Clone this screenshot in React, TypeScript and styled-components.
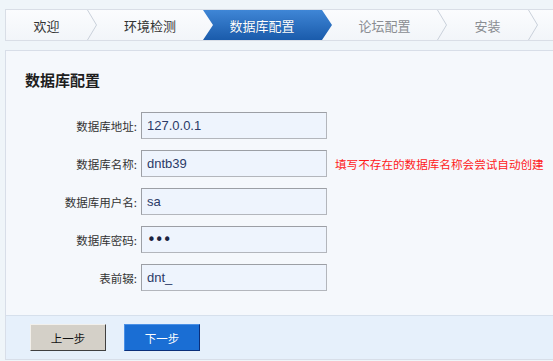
import React from "react";
import styled, { createGlobalStyle, css } from "styled-components";

const GlobalStyle = createGlobalStyle`
  html, body {
    margin: 0;
    padding: 0;
    background: #eff5f9;
    overflow: hidden;
  }
  body {
    font-family: "Noto Sans CJK SC", "Noto Sans", sans-serif;
  }
`;

const Page = styled.div`
  padding: 9px 0 0 5px;
`;

const StepBar = styled.div`
  display: flex;
  height: 30px;
  border: 1px solid #d9dee6;
  border-right: none;
  background: linear-gradient(#fbfcfe, #f2f5f9);
`;

const Step = styled.div<{ $width: number; $muted?: boolean }>`
  width: ${(p) => p.$width}px;
  flex-shrink: 0;
  display: flex;
  align-items: center;
  justify-content: center;
  font-size: 13px;
  color: ${(p) => (p.$muted ? "#8a8d92" : "#333")};
`;

const ActiveStep = styled.div`
  width: 129px;
  flex-shrink: 0;
  box-sizing: border-box;
  padding-right: 11px;
  display: flex;
  align-items: center;
  justify-content: center;
  font-size: 13px;
  color: #fff;
  background: linear-gradient(#3f86d6, #1a5bab);
  clip-path: polygon(0 0, 119px 0, 129px 50%, 119px 100%, 0 100%, 10px 50%);
  text-shadow: 0 0 1px rgba(0, 30, 80, 0.4);
`;

const SepSvg = styled.svg`
  flex-shrink: 0;
  display: block;
`;

const Sep = () => (
  <SepSvg width="10" height="30" viewBox="0 0 10 30">
    <polyline points="0.5,0 9.5,15 0.5,30" fill="none" stroke="#c9d0da" strokeWidth="1" />
  </SepSvg>
);

const Panel = styled.div`
  margin-top: 9px;
  border: 1px solid #d8dee8;
  border-right: none;
  background: #f5f8fc;
`;

const Body = styled.div`
  padding: 17px 0 24px 19px;
`;

const Title = styled.h2`
  margin: 0 0 20px;
  font-size: 15px;
  line-height: 24px;
  font-weight: bold;
  color: #1e1e1e;
`;

const Form = styled.div`
  display: grid;
  grid-template-columns: 112px 186px auto;
  column-gap: 4px;
  row-gap: 11px;
  align-items: center;
`;

const Label = styled.label`
  text-align: right;
  font-size: 11.5px;
  color: #333;
  white-space: nowrap;
`;

const Field = styled.input`
  box-sizing: border-box;
  width: 186px;
  height: 27px;
  margin: 0;
  padding: 0 5px;
  border: 1px solid #b3b6bc;
  border-top-color: #9c9fa5;
  border-left-color: #9c9fa5;
  background: #eef4fd;
  font-family: "Liberation Sans", Arial, sans-serif;
  font-size: 13px;
  color: #2b3a67;
  outline: none;

  &[type="password"] {
    font-family: "DejaVu Sans", sans-serif;
    font-size: 15px;
    letter-spacing: -1px;
    color: #1c2340;
  }
`;

const Hint = styled.span`
  padding-left: 4px;
  font-size: 11.6px;
  color: #ff1a1a;
  white-space: nowrap;
`;

const Footer = styled.div`
  display: flex;
  gap: 18px;
  padding: 8px 0 8px 24px;
  border-top: 1px solid #d6e0ec;
  background: #e6f0fb;
`;

const Button = styled.button<{ $primary?: boolean }>`
  width: 76px;
  height: 27px;
  margin: 0;
  padding: 0;
  font-family: "Noto Sans CJK SC", sans-serif;
  font-size: 11.5px;
  border: 1px solid;
  ${(p) =>
    p.$primary
      ? css`
          background: #1a6ed4;
          color: #fff;
          border-color: #4a90e6 #0b2f7a #0b2f7a #4a90e6;
        `
      : css`
          background: #d4d0c8;
          color: #111;
          border-color: #f2f0ec #404040 #404040 #f2f0ec;
        `}
`;

const fields = [
  { label: "数据库地址:", value: "127.0.0.1" },
  { label: "数据库名称:", value: "dntb39", hint: "填写不存在的数据库名称会尝试自动创建" },
  { label: "数据库用户名:", value: "sa" },
  { label: "数据库密码:", value: "sa1", type: "password" },
  { label: "表前辍:", value: "dnt_" },
];

export default function App() {
  return (
    <Page>
      <GlobalStyle />
      <StepBar>
        <Step $width={81}>欢迎</Step>
        <Sep />
        <Step $width={106}>环境检测</Step>
        <ActiveStep>数据库配置</ActiveStep>
        <Step $width={105} $muted>
          论坛配置
        </Step>
        <Sep />
        <Step $width={81} $muted>
          安装
        </Step>
        <Sep />
      </StepBar>
      <Panel>
        <Body>
          <Title>数据库配置</Title>
          <Form>
            {fields.map((f) => (
              <React.Fragment key={f.label}>
                <Label>{f.label}</Label>
                <Field type={f.type || "text"} defaultValue={f.value} readOnly />
                <Hint>{f.hint || ""}</Hint>
              </React.Fragment>
            ))}
          </Form>
        </Body>
        <Footer>
          <Button>上一步</Button>
          <Button $primary>下一步</Button>
        </Footer>
      </Panel>
    </Page>
  );
}
